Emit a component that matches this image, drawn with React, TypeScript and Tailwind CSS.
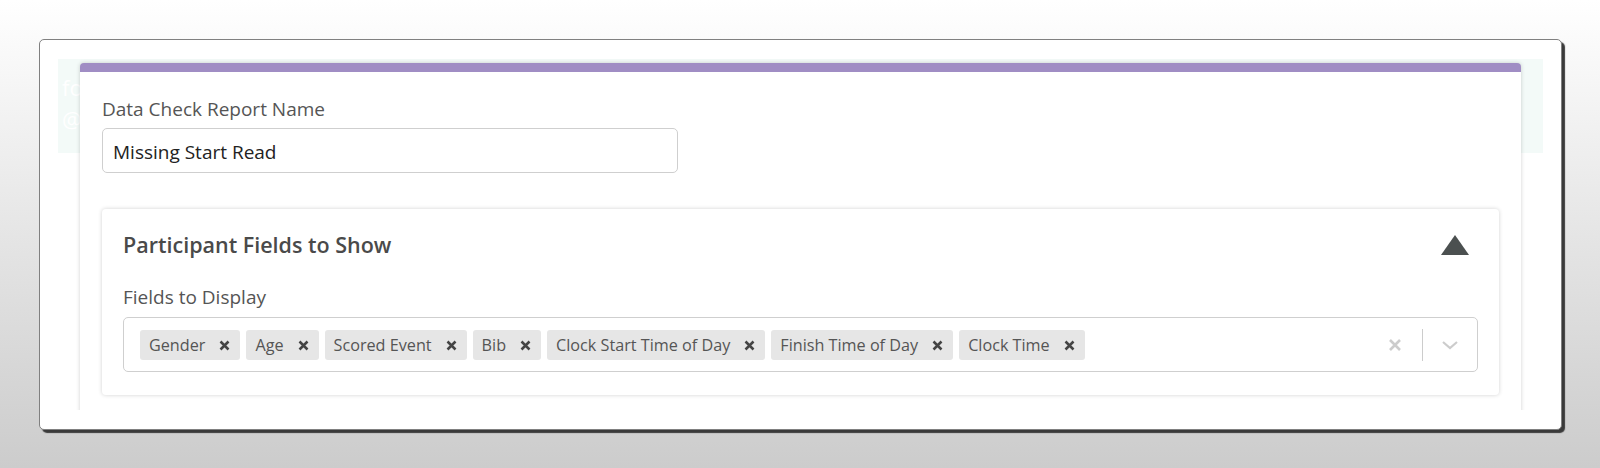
import React from 'react';

const fields = ['Gender', 'Age', 'Scored Event', 'Bib', 'Clock Start Time of Day', 'Finish Time of Day', 'Clock Time'];

const ChipX = () => (
  <svg width="11" height="11" viewBox="0 0 11 11" className="shrink-0">
    <path d="M1.5 1.5 L9.5 9.5 M9.5 1.5 L1.5 9.5" stroke="#444" strokeWidth="2.5" />
  </svg>
);

const Chip: React.FC<{ label: string }> = ({ label }) => (
  <div className="flex h-[30px] items-center gap-[14px] rounded-[3px] bg-[#e6e6e6] pl-[9px] pr-[10px] text-[16.2px] text-[#555]">
    <span>{label}</span>
    <ChipX />
  </div>
);

export default function App() {
  return (
    <div className="h-[468px] w-full bg-gradient-to-b from-white to-[#cccccc] pl-[39px] pr-[38px] pt-[39px] font-['Open_Sans',sans-serif]">
      {/* window frame */}
      <div className="h-[391px] rounded-[5px] border border-[#808080] bg-white px-[18px] py-[19px] shadow-[3px_3px_1px_#3a3a3a]">
        <div className="grid h-[351px] overflow-hidden">
          {/* backdrop header */}
          <div className="[grid-area:1/1] flex h-[94px] flex-col bg-[#f3faf8] pl-[4px] pt-[12px] text-[22px] leading-[32px] text-white">
            <span>fo</span>
            <span>@</span>
          </div>

          {/* card */}
          <div className="[grid-area:1/1] relative mx-[22px] mt-[4px] self-start rounded-t-[4px] border-t-[9px] border-[#a08dc4] bg-white px-[22px] pb-[40px] pt-[25px] shadow-[0_0_4px_rgba(0,0,0,0.18)]">
            <div className="text-[19px] leading-[24px] text-[#555]">Data Check Report Name</div>
            <div className="mt-[7px] flex h-[45px] w-[576px] items-center rounded-[5px] border border-[#cfcfcf] px-[10px] pt-[3px] text-[19px] text-[#222]">
              Missing Start Read
            </div>

            {/* participant fields */}
            <div className="mt-[36px] rounded-[4px] bg-white px-[21px] pb-[23px] pt-[24px] shadow-[0_0_4px_rgba(0,0,0,0.18)]">
              <div className="flex items-center justify-between">
                <div className="text-[21.5px] font-semibold leading-[24px] text-[#4a4a4a]">Participant Fields to Show</div>
                <svg width="28" height="20" viewBox="0 0 28 20" className="mr-[9px]">
                  <polygon points="14,0 28,20 0,20" fill="#4b5050" />
                </svg>
              </div>
              <div className="mt-[28px] text-[19px] leading-[24px] text-[#555]">Fields to Display</div>
              <div className="mt-[8px] flex h-[55px] items-center rounded-[5px] border border-[#cfcfcf] pl-[16px] pr-[18px]">
                <div className="flex flex-1 items-center gap-[6px] pt-px">
                  {fields.map((f) => (
                    <Chip key={f} label={f} />
                  ))}
                </div>
                <svg width="12" height="12" viewBox="0 0 12 12">
                  <path d="M1 1 L11 11 M11 1 L1 11" stroke="#cccccc" strokeWidth="2.6" />
                </svg>
                <div className="ml-[21px] mr-[18px] h-[32px] w-px bg-[#cccccc]" />
                <svg width="18" height="10" viewBox="0 0 18 10">
                  <path d="M2 2 L9 8 L16 2" stroke="#cccccc" strokeWidth="2.2" fill="none" />
                </svg>
              </div>
            </div>
          </div>
        </div>
      </div>
    </div>
  );
}
